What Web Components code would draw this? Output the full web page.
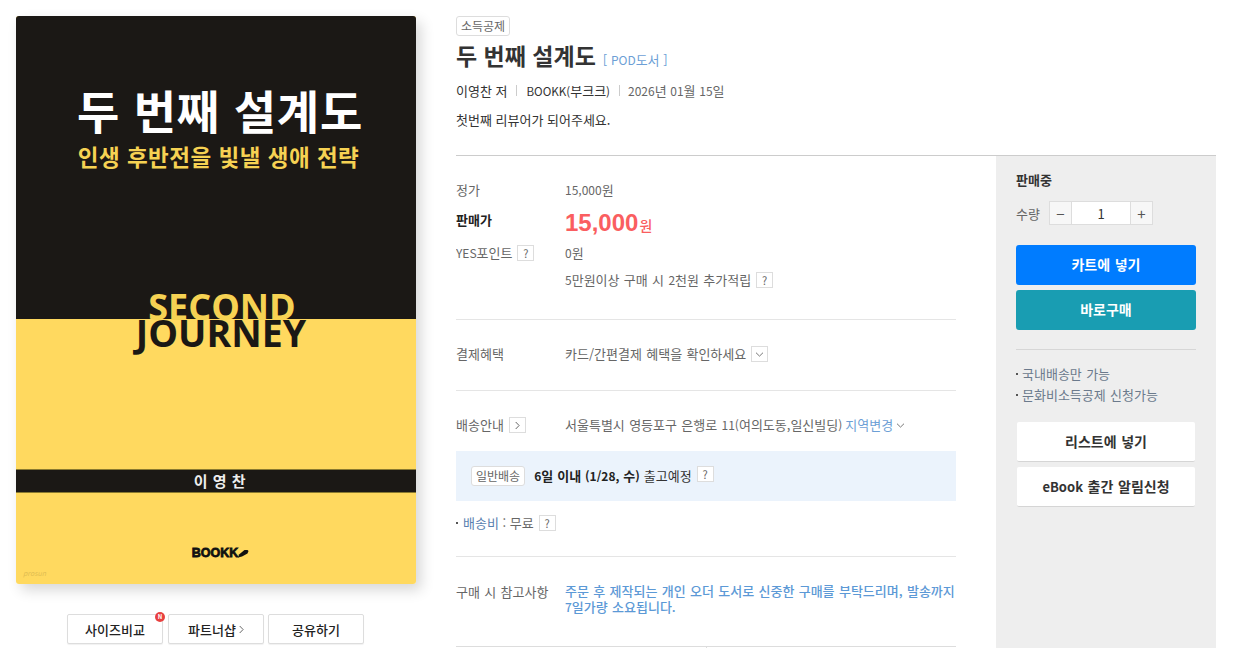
<!DOCTYPE html>
<html lang="ko">
<head>
<meta charset="utf-8">
<title>두 번째 설계도</title>
<style>
    html, body { margin: 0; padding: 0; background: #fff; overflow: hidden; height: 648px; }
    body { font-family: "Noto Sans CJK KR", "Noto Sans", sans-serif; font-size: 13px; color: #666; }
</style>
</head>
<body>
<goods-page>
    <div slot="left">
        <book-cover></book-cover>
        <cover-actions></cover-actions>
    </div>
    <book-head slot="head" title="두 번째 설계도"></book-head>
    <price-panel slot="info"></price-panel>
    <buy-box slot="side"></buy-box>
</goods-page>

<script>
const FONT = `"Noto Sans CJK KR", "Noto Sans", sans-serif`;

// latin and digits run a bit smaller than the hangul next to them
const SHARED = `
    .l { font-size: 12px; }
    .box { display: inline-flex; align-items: center; justify-content: center; box-sizing: border-box; width: 17px; height: 16px; border: 1px solid #ddd; background: #fff; color: #666; font-size: 11px; line-height: 1; }
    .box svg { display: block; }
`;
const ARROW_DOWN = `<svg width="9" height="5" viewBox="0 0 9 5"><path d="M1 .7l3.5 3.4L8 .7" fill="none" stroke="#777"/></svg>`;
const ARROW_RIGHT = `<svg width="5" height="9" viewBox="0 0 5 9"><path d="M.7 1l3.4 3.5L.7 8" fill="none" stroke="#666"/></svg>`;

class GoodsPage extends HTMLElement {
    constructor() {
        super();
        this.attachShadow({ mode: "open" });
        this.shadowRoot.innerHTML = `
            <style>
                :host { display: flex; padding: 16px 21px 0 16px; gap: 40px; height: 632px; overflow: hidden; font-family: ${FONT}; }
                .left { flex: 0 0 400px; }
                .right { flex: 1; min-width: 0; }
                .body { display: flex; border-top: 1px solid #ccc; height: 492px; overflow: hidden; }
                .info { flex: 0 0 500px; }
                .side { flex: 0 0 220px; margin-left: 40px; background: #eee; }
            </style>
            <div class="left"><slot name="left"></slot></div>
            <div class="right">
                <slot name="head"></slot>
                <div class="body">
                    <div class="info"><slot name="info"></slot></div>
                    <div class="side"><slot name="side"></slot></div>
                </div>
            </div>
        `;
    }
}

class BookCover extends HTMLElement {
    constructor() {
        super();
        this.attachShadow({ mode: "open" });
        this.shadowRoot.innerHTML = `
            <style>
                :host { display: block; width: 400px; height: 568px; }
                .wrap { height: 100%; border-radius: 3px; box-shadow: 5px 6px 14px rgba(0,0,0,.16); }
                .cover { position: relative; height: 100%; display: flex; flex-direction: column; border-radius: 3px; overflow: hidden; background: #ffd95f; }
                .top { height: 303px; box-sizing: border-box; background: #1b1815; padding: 65px 0 0 8px; text-align: center; }
                .t1 { color: #fff; font-size: 46px; font-weight: 700; line-height: 56px; letter-spacing: .8px; }
                .t2 { color: #f6d253; font-size: 22.5px; font-weight: 700; line-height: 34px; margin: 2px 0 0 -3px; letter-spacing: .5px; }
                .en { position: absolute; left: 12px; right: 0; top: 277px; text-align: center; font-family: "Open Sans", sans-serif; font-weight: 700; line-height: 28px; }
                .en .a { color: #f6d253; display: block; font-size: 36px; }
                .en .b { color: #1b1815; display: block; font-size: 37.5px; margin: -2px 0 0 -2px; }
                .mid { flex: 0 0 150px; }
                .author { height: 24px; padding-left: 8px; background: #1b1815; border-top: 1px solid #8a7a30; border-bottom: 1px solid #8a7a30; color: #eee; font-size: 15px; font-weight: 700; text-align: center; line-height: 22px; letter-spacing: .5px; box-sizing: border-box; }
                .bottom { flex: 1; position: relative; display: flex; justify-content: center; padding: 53px 0 0 9px; }
                .logo { height: 15px; font-family: "Liberation Sans", sans-serif; font-weight: 700; font-size: 12.5px; color: #111; line-height: 15px; -webkit-text-stroke: .8px #111; display: flex; align-items: center; }
                .mark { position: absolute; left: 7px; bottom: 6px; font-size: 7px; color: #dfbd52; font-style: italic; }
            </style>
            <div class="wrap"><div class="cover">
                <div class="top">
                    <div class="t1">두 번째 설계도</div>
                    <div class="t2">인생 후반전을 빛낼 생애 전략</div>
                </div>
                <div class="en"><span class="a">SECOND</span><span class="b">JOURNEY</span></div>
                <div class="mid"></div>
                <div class="author">이 영 찬</div>
                <div class="bottom">
                    <div class="logo">BOOKK<svg width="11" height="9" viewBox="0 0 11 9"><path d="M0 8.5l1-3L6.500 1 9.500 1l1 1-1 2.500L4 7.500z" fill="#111"/></svg></div>
                    <span class="mark">prosun</span>
                </div>
            </div></div>
        `;
    }
}

class CoverActions extends HTMLElement {
    constructor() {
        super();
        this.attachShadow({ mode: "open" });
        this.shadowRoot.innerHTML = `
            <style>
                :host { display: flex; justify-content: flex-start; padding-left: 51px; gap: 5px; margin-top: 30px; }
                .btn { position: relative; box-sizing: border-box; width: 96px; height: 30px; background: #fff; border: 1px solid #ddd; border-radius: 2px; box-shadow: 0 1px 1px rgba(0,0,0,.06); display: flex; align-items: center; justify-content: center; gap: 3px; font-size: 13px; font-weight: 500; color: #222; }
                .btn:last-child { margin-left: -1px; }
                .n { position: absolute; top: -3px; right: -3px; width: 10px; height: 10px; border-radius: 50%; background: #e8403f; color: #fff; font-size: 6px; font-weight: 700; line-height: 10px; text-align: center; }
            </style>
            <div class="btn">사이즈비교<span class="n">N</span></div>
            <div class="btn">파트너샵${ARROW_RIGHT}</div>
            <div class="btn">공유하기</div>
        `;
    }
}

class BookHead extends HTMLElement {
    constructor() {
        super();
        this.attachShadow({ mode: "open" });
        let title = this.getAttribute("title") || "";
        this.shadowRoot.innerHTML = `
            <style>
                :host { display: block; height: 139px; box-sizing: border-box; }
                ${SHARED}
                .tag { display: inline-block; box-sizing: border-box; height: 20px; padding: 0 4px; border: 1px solid #ddd; border-radius: 3px; font-size: 12px; line-height: 18px; color: #666; vertical-align: top; }
                .tag-row { height: 20px; }
                h1 { margin: 2px 0 0; font-size: 23px; font-weight: 700; line-height: 34px; color: #333; display: flex; align-items: baseline; }
                h1 span { font-size: 13px; font-weight: 400; color: #6d9fd6; margin-left: 7px; }
                .meta { display: flex; align-items: center; margin-top: 4px; height: 18px; font-size: 13px; color: #333; }
                .meta i { width: 1px; height: 11px; background: #ccc; margin: 0 9px; }
                .meta .pub .l { font-size: 11.6px; }
                .meta .date { color: #666; margin-left: -1px; }
                .rev { margin-top: 12px; font-size: 13px; line-height: 18px; color: #333; }
            </style>
            <div class="tag-row"><span class="tag">소득공제</span></div>
            <h1>${title}<span>[ <span class="l" style="margin:0;font-size:12px">POD</span>도서 ]</span></h1>
            <div class="meta"><span>이영찬 저</span><i></i><span class="pub"><span class="l">BOOKK(</span>부크크<span class="l">)</span></span><i></i><span class="date"><span class="l">2026</span>년 <span class="l">01</span>월 <span class="l">15</span>일</span></div>
            <div class="rev">첫번째 리뷰어가 되어주세요.</div>
        `;
    }
}

class PricePanel extends HTMLElement {
    constructor() {
        super();
        this.attachShadow({ mode: "open" });
        this.shadowRoot.innerHTML = `
            <style>
                :host { display: block; font-size: 13px; color: #666; line-height: 18px; word-spacing: .7px; }
                ${SHARED}
                .sec { border-bottom: 1px solid #e5e5e5; box-sizing: border-box; }
                .row { display: flex; }
                .k { flex: 0 0 109px; display: flex; align-items: center; gap: 5px; }
                .v { flex: 1; display: flex; align-items: center; gap: 5px; min-width: 0; }
                .s1 { height: 164px; padding-top: 25px; }
                .sale { margin-top: 9px; height: 30px; align-items: center; }
                .sale .k { color: #222; font-weight: 700; padding-bottom: 6px; }
                .sale .v { color: #fa5e60; font-weight: 700; gap: 1px; align-items: baseline; }
                .sale b { font-size: 24px; line-height: 30px; font-family: "Liberation Sans", sans-serif; }
                .sale em { font-style: normal; font-size: 14px; font-weight: 500; }
                .pt { margin-top: 6px; }
                .add { margin-top: 9px; padding-left: 109px; display: flex; align-items: center; gap: 5px; }
                .s2 { height: 71px; padding-top: 25px; }
                .s3 { height: 166px; padding-top: 25px; }
                .blue { color: #6d9fd6; display: inline-flex; align-items: center; gap: 3px; margin-left: -2px; }
                .ship { display: flex; align-items: center; height: 50px; margin-top: 17px; background: #ebf3fc; padding: 0 15px; gap: 9px; color: #333; word-spacing: .3px; }
                .chip { box-sizing: border-box; height: 20px; padding: 0 4px; line-height: 18px; border: 1px solid #ddd; border-radius: 3px; background: #fff; color: #666; font-size: 12px; }
                .ship strong { font-weight: 700; color: #222; }
                .ship .box { margin: -4px 0 0 -4px; }
                .fee { display: flex; align-items: center; gap: 5px; margin-top: 13px; word-spacing: 0; }
                .fee i { width: 2px; height: 2px; background: #555; }
                .fee .l2 { color: #5a7fb0; }
                .s4 { height: 90px; padding-top: 26px; border-bottom: 0; }
                .note { display: block; color: #5c99d6; font-weight: 500; line-height: 16px; }
                .s4 .k { align-items: flex-start; }
                .tbl { display: flex; height: 2px; margin-top: -1px; border-top: 1px solid #ddd; }
                .tbl div { flex: 1; }
                .tbl div + div { border-left: 1px solid #ddd; }
            </style>
            <div class="sec s1">
                <div class="row"><div class="k">정가</div><div class="v"><span><span class="l">15,000</span>원</span></div></div>
                <div class="row sale"><div class="k">판매가</div><div class="v"><b>15,000</b><em>원</em></div></div>
                <div class="row pt"><div class="k"><span><span class="l">YES</span>포인트</span> <span class="box">?</span></div><div class="v"><span><span class="l">0</span>원</span></div></div>
                <div class="add"><span><span class="l">5</span>만원이상 구매 시 <span class="l">2</span>천원 추가적립</span> <span class="box">?</span></div>
            </div>
            <div class="sec s2">
                <div class="row"><div class="k">결제혜택</div><div class="v">카드/간편결제 혜택을 확인하세요 <span class="box">${ARROW_DOWN}</span></div></div>
            </div>
            <div class="sec s3">
                <div class="row"><div class="k">배송안내 <span class="box">${ARROW_RIGHT}</span></div><div class="v"><span>서울특별시 영등포구 은행로 <span class="l">11(</span>여의도동,일신빌딩<span class="l">)</span></span> <span class="blue">지역변경 ${ARROW_DOWN}</span></div></div>
                <div class="ship"><span class="chip">일반배송</span><span><strong><span class="l">6</span>일 이내 <span class="l">(1/28,</span> 수<span class="l">)</span></strong> 출고예정</span><span class="box">?</span></div>
                <div class="fee"><i></i><span><span class="l2">배송비</span> : 무료</span><span class="box">?</span></div>
            </div>
            <div class="sec s4">
                <div class="row"><div class="k">구매 시 참고사항</div><div class="v note">주문 후 제작되는 개인 오더 도서로 신중한 구매를 부탁드리며, 발송까지 <span class="l">7</span>일가량 소요됩니다.</div></div>
            </div>
            <div class="tbl"><div></div><div></div></div>
        `;
    }
}

class BuyBox extends HTMLElement {
    constructor() {
        super();
        this.attachShadow({ mode: "open" });
        this.shadowRoot.innerHTML = `
            <style>
                :host { display: block; padding: 15px 20px; font-size: 13px; color: #666; word-spacing: .7px; }
                .state { font-weight: 700; color: #333; line-height: 18px; }
                .qty { display: flex; align-items: center; margin-top: 12px; height: 24px; }
                .qty label { width: 33px; }
                .qty span { box-sizing: border-box; height: 24px; display: flex; align-items: center; justify-content: center; border: 1px solid #ddd; }
                .qty .b { width: 23px; background: #f7f7f7; color: #555; font-size: 15px; }
                .qty .n { width: 58px; background: #fff; color: #333; border-width: 1px 0; }
                .main { display: block; box-sizing: border-box; height: 40px; line-height: 39px; text-align: center; border-radius: 3px; color: #fff; font-weight: 700; font-size: 14px; }
                .cart { background: #007cff; margin-top: 20px; }
                .now { background: #199db2; margin-top: 5px; }
                hr { border: 0; border-top: 1px solid #d6d6d6; margin: 19px 0 13px; }
                ul { list-style: none; margin: 0; padding: 0; color: #6b7a8c; line-height: 21px; }
                li { display: flex; align-items: center; gap: 4px; }
                li::before { content: ""; width: 2px; height: 2px; background: #555; }
                .sub { box-sizing: border-box; display: block; height: 40px; margin: 0 1px; line-height: 38px; text-align: center; background: #fff; border-radius: 2px; border-bottom: 1px solid #d5d5d5; font-weight: 700; color: #333; font-size: 14px; }
                .list { margin-top: 17px; }
                .ebook { margin-top: 5px; }
                .sub i { font-style: normal; font-size: 13px; }
            </style>
            <div class="state">판매중</div>
            <div class="qty"><label>수량</label><span class="b">−</span><span class="n">1</span><span class="b">+</span></div>
            <div class="main cart">카트에 넣기</div>
            <div class="main now">바로구매</div>
            <hr>
            <ul><li>국내배송만 가능</li><li>문화비소득공제 신청가능</li></ul>
            <div class="sub list">리스트에 넣기</div>
            <div class="sub ebook"><i>eBook</i> 출간 알림신청</div>
        `;
    }
}

customElements.define("goods-page", GoodsPage);
customElements.define("book-cover", BookCover);
customElements.define("cover-actions", CoverActions);
customElements.define("book-head", BookHead);
customElements.define("price-panel", PricePanel);
customElements.define("buy-box", BuyBox);
</script>
</body>
</html>
